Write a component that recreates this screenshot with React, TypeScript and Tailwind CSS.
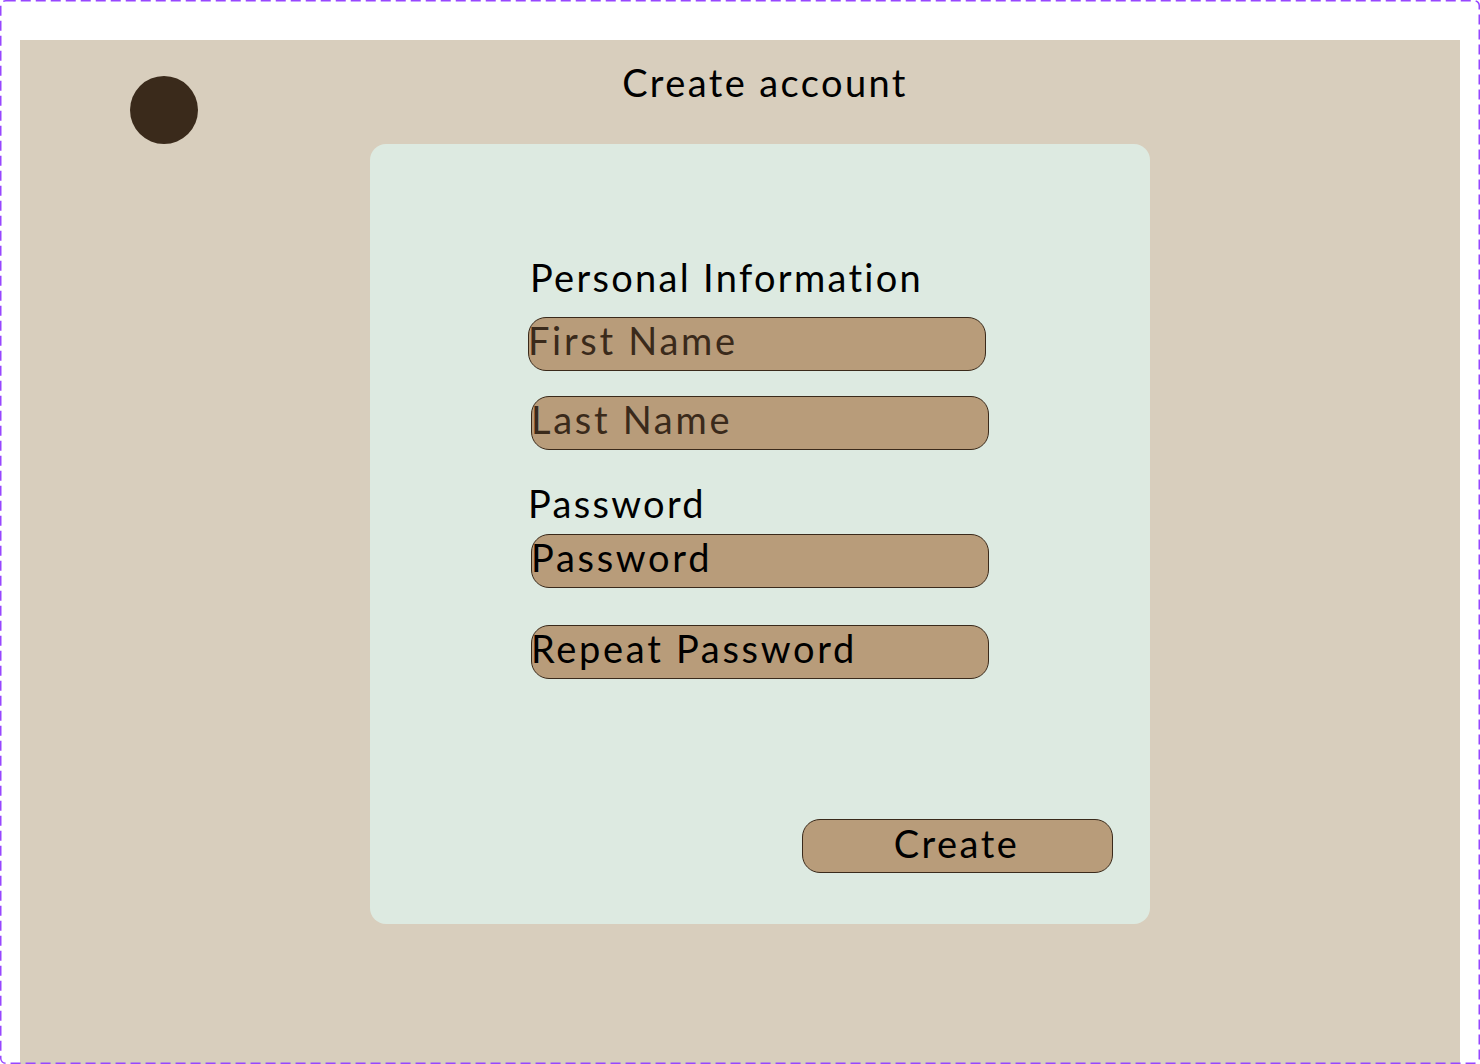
import React from "react";

const font = { fontFamily: "Lato, 'Noto Sans', sans-serif" };

function Field({ text, dark, ml, mt }: { text: string; dark?: boolean; ml: string; mt: string }) {
  return (
    <div
      className={`${ml} ${mt} flex h-[54px] w-[458px] items-center rounded-[18px] border border-[#3a2a1b] bg-[#b89c7a] text-[38px] leading-none tracking-[2.7px] ${
        dark ? "text-[#3a2a1b]" : "text-black"
      }`}
    >
      <span className="-mt-[8px] -ml-[1px]">{text}</span>
    </div>
  );
}

export default function App() {
  return (
    <div className="relative h-[1064px] w-[1480px] bg-white" style={font}>
      <div className="h-full w-full px-[20px] pt-[40px]">
        <div className="relative flex h-full flex-col items-center bg-[#d8cebd]">
          <div className="absolute left-[110px] top-[36px] h-[68px] w-[68px] rounded-full bg-[#3a2a1b]" />
          <h1 className="mt-[19px] ml-[50px] text-[38px] leading-[46px] tracking-[2.4px] text-black">Create account</h1>
          <div className="mt-[39px] ml-[40px] flex h-[780px] w-[780px] flex-col rounded-[16px] bg-[#ddeae1]">
            <div className="ml-[160px] mt-[110px] text-[38px] leading-[46px] tracking-[2.3px] text-black">Personal Information</div>
            <Field text="First Name" dark ml="ml-[158px]" mt="mt-[17px]" />
            <Field text="Last Name" dark ml="ml-[161px]" mt="mt-[25px]" />
            <div className="ml-[158px] mt-[30px] text-[38px] leading-[46px] tracking-[2.3px] text-black">Password</div>
            <Field text="Password" ml="ml-[161px]" mt="mt-[8px]" />
            <Field text="Repeat Password" ml="ml-[161px]" mt="mt-[37px]" />
            <div className="ml-[432px] mt-[140px] flex h-[54px] w-[311px] items-center justify-center rounded-[18px] border border-[#3a2a1b] bg-[#b89c7a] text-[38px] leading-none tracking-[2.5px] text-black">
              <span className="-mt-[7px] mr-[2px]">Create</span>
            </div>
          </div>
        </div>
      </div>
      <svg className="pointer-events-none absolute inset-0" width="1480" height="1064">
        <rect x="0.75" y="0.75" width="1478.5" height="1062.5" rx="5" fill="none" stroke="#9747ff" strokeWidth="1.5" strokeDasharray="10 5" />
      </svg>
    </div>
  );
}
